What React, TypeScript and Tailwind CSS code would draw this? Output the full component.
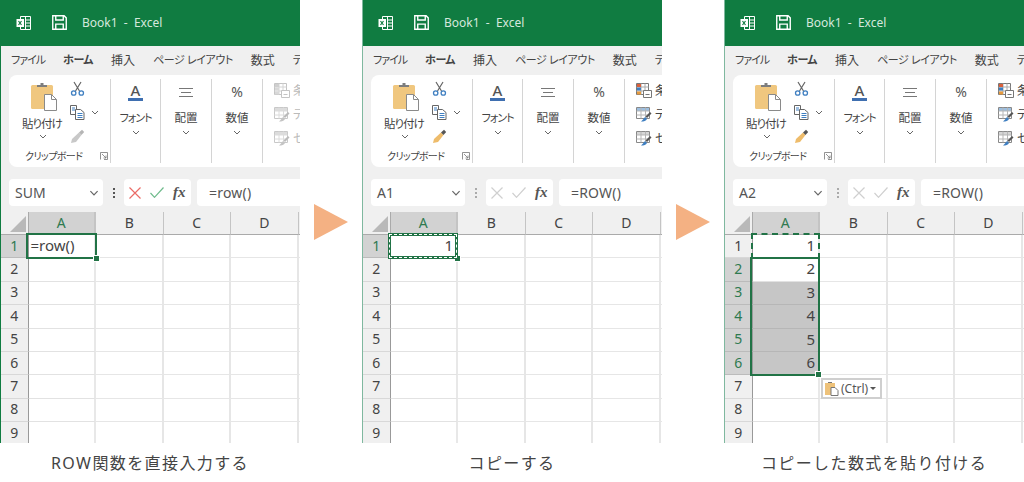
import { Fragment } from 'react';

const ROWS = [1, 2, 3, 4, 5, 6, 7, 8, 9];
const COLS = ['A', 'B', 'C', 'D'];

function Chevron({ className = '', big = false }: { className?: string; big?: boolean }) {
  return (
    <svg className={className} width={big ? 10 : 8} height={big ? 6 : 5} viewBox="0 0 8 5" fill="none" stroke="#666" strokeWidth="1">
      <path d="M1 1l3 3 3-3" />
    </svg>
  );
}

function ExcelLogo() {
  return (
    <svg width="16" height="16" viewBox="0 0 16 16" fill="none" stroke="#fff" strokeWidth="1">
      <path d="M4.500 1.500h10v13h-10z" />
      <path d="M9.500 1.500v13M9.500 5h5M9.500 8h5M9.500 11h5" />
      <rect x="0.500" y="4" width="7.500" height="8" fill="#fff" stroke="none" />
      <path d="M2.500 6l3 4M5.500 6l-3 4" stroke="#107c41" strokeWidth="1.200" />
    </svg>
  );
}

function SaveIcon() {
  return (
    <svg width="15" height="15" viewBox="0 0 14 14" fill="none" stroke="#fff" strokeWidth="1.300">
      <path d="M.7.7h10.600l2 2v10.600H.7z" />
      <path d="M3.500.7v4h7v-4M3.500 13.300V8.500h7v4.800" />
    </svg>
  );
}

function PasteIcon() {
  return (
    <svg width="28" height="29" viewBox="0 0 28 29">
      <rect x="1" y="3" width="22" height="24" rx="1.500" fill="#f0c77f" />
      <path d="M7 5V3h3.500V1h3v2H17v2z" fill="#7d7d7d" />
      <path d="M14.500 12.500h7l5 5v11h-12z" fill="#fff" stroke="#8a8a8a" />
      <path d="M21.500 12.500v5h5" fill="none" stroke="#8a8a8a" />
    </svg>
  );
}

function ScissorsIcon() {
  return (
    <svg width="15" height="15" viewBox="0 0 15 15" fill="none">
      <path d="M4 1l5.500 9M11 1L5.500 10" stroke="#666" strokeWidth="1.200" />
      <circle cx="3.700" cy="12" r="2.200" stroke="#3f7fc1" strokeWidth="1.300" />
      <circle cx="11.300" cy="12" r="2.200" stroke="#3f7fc1" strokeWidth="1.300" />
    </svg>
  );
}

function CopyIcon() {
  return (
    <svg width="15" height="15" viewBox="0 0 15 15" fill="none" stroke="#666">
      <path d="M.5.500h6v9h-6z" fill="#fff" />
      <path d="M5.500 4.500h5l3.500 3v7H5.500z" fill="#fff" />
      <path d="M2 3h3M2 5h3M7.500 8.500h5M7.500 10.500h5M7.500 12.500h5" stroke="#3f7fc1" />
    </svg>
  );
}

function BrushIcon({ on }: { on: boolean }) {
  return (
    <svg width="15" height="15" viewBox="0 0 15 15">
      <path d="M9 3.500l2.500 2.500L6 13 1 14l1-4z" fill={on ? '#eebc6b' : '#c8c8c8'} />
      <path d="M9 3.500L12 .8l2.200 2.200-2.700 3z" fill={on ? '#555' : '#b5b5b5'} />
    </svg>
  );
}

function Launcher() {
  return (
    <svg width="8" height="8" viewBox="0 0 8 8" fill="none" stroke="#777" strokeWidth="0.800">
      <path d="M.5 7.500v-7h7v7H4" />
      <path d="M2 2l4 4M6 3.500V6H3.500" />
    </svg>
  );
}

// conditional format: coloured cells and a small sheet
function CondIcon({ on }: { on: boolean }) {
  const ink = on ? '#777' : '#c4c4c4';
  return (
    <svg width="16" height="15" viewBox="0 0 16 15" fill="none" stroke={ink}>
      <path d="M.5.500h12v11H.5z" />
      <path d="M.5 4h12M.5 8h12M5 .5v11M9 .5v11" stroke={on ? '#aaa' : '#d4d4d4'} />
      <rect x="1" y="1" width="4" height="3" fill={on ? '#d9603b' : '#cfcfcf'} stroke="none" />
      <rect x="1" y="4.500" width="4" height="3" fill={on ? '#3f7fc1' : '#d8d8d8'} stroke="none" />
      <rect x="1" y="8.500" width="4" height="3" fill={on ? '#e79a3d' : '#d8d8d8'} stroke="none" />
      <path d="M7.500 7.500h8v7h-8z" fill="#fff" />
      <path d="M9.500 11.500h4" />
    </svg>
  );
}

// table and cell style: sheet with a blue brush on its corner
function StyleIcon({ on, head }: { on: boolean; head: string }) {
  const ink = on ? '#888' : '#c8c8c8';
  return (
    <svg width="16" height="15" viewBox="0 0 16 15" fill="none" stroke={ink}>
      <path d="M.5.500h13v11H.5z" />
      <rect x="1" y="1" width="12" height="3" fill={on ? head : '#dcdcdc'} stroke="none" />
      <path d="M.5 4h13M.5 8h13M5 .5v11M9.500.5v11" stroke={on ? '#b5b5b5' : '#dcdcdc'} />
      <path d="M14 5l1.500 1.500-4.500 4.500-1.500-1.500z" fill={on ? '#555' : '#bbb'} stroke="none" />
      <path d="M9 10l2 2c-1 2-3 2.500-6 2.500 1.500-1 2.500-3 4-4.500z" fill={on ? '#3f7fc1' : '#c4c4c4'} stroke="none" />
    </svg>
  );
}

function BigGroup({ width, label, labelClass, icon }: { width: string; label: string; labelClass: string; icon: React.ReactNode }) {
  return (
    <div className={`${width} flex flex-col items-center border-r border-[#d4d4d4] h-[84px]`}>
      <div className="h-[24px] mt-[1px] flex items-center justify-center">{icon}</div>
      <span className={`${labelClass} leading-[14px] mt-[7px] text-[#444] whitespace-nowrap`}>{label}</span>
      <Chevron className="mt-[5px]" />
    </div>
  );
}

function Ribbon({ on }: { on: boolean }) {
  const labelClass = on ? 'text-[12px] text-[#444]' : 'text-[12px] text-[#bbb]';
  return (
    <div className="ml-[8px] h-[92px] bg-white rounded-l-lg flex pt-[4px] overflow-hidden">
      {/* clipboard */}
      <div className="w-[102px] h-[84px] shrink-0 border-r border-[#d4d4d4] flex flex-col">
        <div className="flex h-[74px]">
          <div className="w-[56px] pl-[14px] flex flex-col">
            <div className="mt-[3px] ml-[7px]"><PasteIcon /></div>
            <span className="-ml-[1px] mt-[6px] text-[11.5px] tracking-[-1px] leading-[14px] text-[#444] whitespace-nowrap">貼り付け</span>
            <Chevron className="ml-[16px] mt-[3px]" />
          </div>
          <div className="ml-[5px] flex flex-col gap-[9px] pt-[2px]">
            <ScissorsIcon />
            <div className="flex items-center gap-[6px]">
              <CopyIcon />
              <Chevron />
            </div>
            <BrushIcon on={on} />
          </div>
        </div>
        <div className="flex items-center h-[14px] pl-[16px] mt-[1px]">
          <span className="text-[10px] tracking-[-0.6px] leading-[14px] text-[#444] whitespace-nowrap">クリップボード</span>
          <span className="ml-[18px]"><Launcher /></span>
        </div>
      </div>
      <BigGroup
        width="w-[50px] shrink-0"
        label="フォント"
        labelClass="text-[11px] tracking-[-1px]"
        icon={
          <div className="flex flex-col items-center">
            <span className="text-[15px] leading-[14px] text-[#555] font-medium">A</span>
            <span className="w-[15px] h-[3px] bg-[#3f6fb0] mt-[1px]" />
          </div>
        }
      />
      <BigGroup
        width="w-[51px] shrink-0"
        label="配置"
        labelClass="text-[11.5px]"
        icon={
          <svg width="14" height="9" viewBox="0 0 14 9" stroke="#777">
            <path d="M0 .5h14M2 4.500h10M0 8.500h14" />
          </svg>
        }
      />
      <BigGroup
        width="w-[51px] shrink-0"
        label="数値"
        labelClass="text-[11.5px]"
        icon={<span className="text-[14px] leading-none text-[#555]">%</span>}
      />
      <div className="pl-[11px] pt-[4px] flex flex-col gap-[9px] shrink-0">
        <div className="flex items-center gap-[3px] h-[15px]">
          <CondIcon on={on} />
          <span className={labelClass}>条</span>
        </div>
        <div className="flex items-center gap-[3px] h-[15px]">
          <StyleIcon on={on} head="#9dbfe0" />
          <span className={labelClass}>テ</span>
        </div>
        <div className="flex items-center gap-[3px] h-[15px]">
          <StyleIcon on={on} head="#d5d5d5" />
          <span className={labelClass}>セ</span>
        </div>
      </div>
    </div>
  );
}

function FormulaBar({ name, formula, editing }: { name: string; formula: string; editing: boolean }) {
  return (
    <div className="h-[45px] flex items-center pl-[8px] pt-[6px]">
      <div className="w-[94px] h-[27px] shrink-0 bg-white rounded-[4px] flex items-center justify-between pl-[6px] pr-[4px]">
        <span className="text-[14px] text-[#555]">{name}</span>
        <Chevron big />
      </div>
      <div className="w-[21px] shrink-0 flex flex-col items-center gap-[2px]">
        {[0, 1, 2].map((i) => (
          <span key={i} className={editing ? 'w-[2px] h-[2px] bg-[#555]' : 'w-[2px] h-[2px] bg-[#aaa]'} />
        ))}
      </div>
      <div className="w-[67px] h-[27px] shrink-0 bg-white rounded-[4px] flex items-center pl-[5px] gap-[9px]">
        <svg width="12" height="12" viewBox="0 0 12 12" fill="none" stroke={editing ? '#ea6b66' : '#cfcfcf'} strokeWidth="1.200">
          <path d="M.5.500l11 11M11.500.5l-11 11" />
        </svg>
        <svg width="14" height="11" viewBox="0 0 14 11" fill="none" stroke={editing ? '#6fbb8c' : '#cfcfcf'} strokeWidth="1.200">
          <path d="M.5 6l4 4.300L13.500.5" />
        </svg>
        <span className="font-['Liberation_Serif'] italic font-bold text-[15px] leading-none text-[#555]">fx</span>
      </div>
      <div className="ml-[6px] flex-1 h-[27px] bg-white rounded-l-[4px] pl-[12px] flex items-center">
        <span className="text-[14px] text-[#555] tracking-[0.2px]">{formula}</span>
      </div>
    </div>
  );
}

type SheetProps = {
  cells: Record<number, string>;
  left?: boolean;
  active: number[];
  shaded: number[];
  children?: React.ReactNode;
};

function Sheet({ cells, left, active, shaded, children }: SheetProps) {
  return (
    <div className="relative h-[231px] overflow-hidden bg-white grid grid-cols-[27.5px_repeat(4,67.500px)_3px] grid-rows-[23px_repeat(9,23.400px)]">
      <div className="bg-[#f0f0f0] border-r border-b border-[#aaa] flex items-end justify-end p-[2px]">
        <svg width="16" height="16" viewBox="0 0 16 16">
          <path d="M16 0v16H0z" fill="#b9b9b9" />
        </svg>
      </div>
      {COLS.map((c) => (
        <div
          key={c}
          className={
            c === 'A'
              ? 'bg-[#d2d2d2] border-b border-[#aaa] border-r-2 border-r-[#c4c4c4] pb-[2px] text-[14px] text-[#2f7a50] flex items-center justify-center'
              : 'bg-[#f0f0f0] border-b border-[#aaa] border-r border-r-[#c4c4c4] pb-[2px] text-[14px] text-[#444] flex items-center justify-center'
          }
        >
          {c}
        </div>
      ))}
      <div className="bg-[#f0f0f0] border-b border-[#aaa]" />
      {ROWS.map((r) => (
        <Fragment key={r}>
          <div
            className={
              active.includes(r)
                ? 'bg-[#d2d2d2] border-b border-[#bbb] border-r border-r-[#999] pb-[2px] text-[14px] text-[#2f7a50] flex items-center justify-center'
                : 'bg-[#f0f0f0] border-b border-[#d8d8d8] border-r border-r-[#999] pb-[2px] text-[14px] text-[#444] flex items-center justify-center'
            }
          >
            {r}
          </div>
          <div
            className={`${shaded.includes(r) ? 'bg-[#c6c6c6] border-[#b6b6b6]' : 'border-[#e2e2e2]'} border-b border-r-2 border-r-[#e8e8e8] pb-[2px] text-[15px] text-[#444] flex items-center ${left ? 'justify-start pl-[2px]' : 'justify-end pr-[3px]'}`}
          >
            {cells[r]}
          </div>
          {[0, 1, 2].map((c) => (
            <div key={c} className="border-b border-r-2 border-[#e6e6e6]" />
          ))}
          <div className="border-b border-[#e6e6e6]" />
        </Fragment>
      ))}
      {children}
    </div>
  );
}

function Handle({ className }: { className: string }) {
  return <span className={`absolute w-[5px] h-[5px] bg-[#217346] border border-white box-content ${className}`} />;
}

function Pane({
  name,
  formula,
  editing,
  edge,
  caption,
  sheet,
}: {
  name: string;
  formula: string;
  editing: boolean;
  edge: string;
  caption: string;
  sheet: React.ReactNode;
}) {
  return (
    <div className="w-[300px] shrink-0 flex flex-col">
      <div className={`h-[443px] bg-[#f0f0f0] border-l-[1.5px] ${edge} overflow-hidden`}>
        <div className="h-[46px] -ml-[2px] bg-[#107c41] flex items-center pl-[17px] pb-[1px]">
          <ExcelLogo />
          <span className="ml-[20px]"><SaveIcon /></span>
          <span className="ml-[15px] text-[12px] text-[#d5e8dd] whitespace-pre">Book1  -  Excel</span>
        </div>
        <div className="h-[29px] flex items-center pl-[10px] gap-[18px] text-[#444] whitespace-nowrap">
          <span className="text-[11px] tracking-[-1px]">ファイル</span>
          <span className="text-[11px] tracking-[-0.5px] font-bold">ホーム</span>
          <span className="text-[12px]">挿入</span>
          <span className="text-[11px] tracking-[-0.4px]">ページ レイアウト</span>
          <span className="text-[12px]">数式</span>
          <span className="text-[11px] tracking-[-0.5px]">データ</span>
        </div>
        <Ribbon on={!editing} />
        <FormulaBar name={name} formula={formula} editing={editing} />
        {sheet}
      </div>
      <p className="h-[39px] flex items-center justify-center text-[16px] tracking-[1.4px] text-[#444] [font-feature-settings:normal]">{caption}</p>
    </div>
  );
}

function Arrow() {
  return (
    <div className="w-[62px] shrink-0 flex justify-center pt-[204px]">
      <svg width="34" height="36" viewBox="0 0 34 36">
        <path d="M0 0l34 18L0 36z" fill="#f4b183" />
      </svg>
    </div>
  );
}

export default function App() {
  return (
    <div className="w-[1024px] h-[482px] bg-white overflow-hidden flex font-['Noto_Sans','Noto_Sans_CJK_JP',sans-serif] [font-feature-settings:'palt']">
      <Pane
        name="SUM"
        formula="=row()"
        editing
        edge="border-[#107c41]"
        caption="ROW関数を直接入力する"
        sheet={
          <Sheet cells={{ 1: '=row()' }} left active={[1]} shaded={[]}>
            <div className="absolute left-[25px] top-[21px] w-[71px] h-[26px] border-2 border-[#217346]" />
            <Handle className="left-[92px] top-[43px]" />
          </Sheet>
        }
      />
      <Arrow />
      <Pane
        name="A1"
        formula="=ROW()"
        editing={false}
        edge="border-[#7fb89f]"
        caption="コピーする"
        sheet={
          <Sheet cells={{ 1: '1' }} active={[1]} shaded={[]}>
            <Handle className="left-[91px] top-[43px]" />
            <div className="absolute left-[25px] top-[21px] w-[70px] h-[26px] border-[3px] border-[#217346]">
              <div className="-m-[2px] w-[calc(100%+4px)] h-[calc(100%+4px)] border border-dashed border-white" />
            </div>
          </Sheet>
        }
      />
      <Arrow />
      <Pane
        name="A2"
        formula="=ROW()"
        editing={false}
        edge="border-[#7fb89f]"
        caption="コピーした数式を貼り付ける"
        sheet={
          <Sheet cells={{ 1: '1', 2: '2', 3: '3', 4: '4', 5: '5', 6: '6' }} active={[2, 3, 4, 5, 6]} shaded={[3, 4, 5, 6]}>
            <div className="absolute left-[26px] top-[21px] w-[69px] h-[26px] border-2 border-dashed border-[#217346]" />
            <div className="absolute left-[25px] top-[45px] w-[70px] h-[119px] border-2 border-[#217346]" />
            <Handle className="left-[90px] top-[159px]" />
            <div className="absolute left-[96px] top-[166px] w-[61px] h-[21px] bg-white border-2 border-[#cfcfcf] flex items-center pl-[2px]">
              <svg width="14" height="15" viewBox="0 0 14 15">
                <rect x="0" y="2" width="10" height="12" fill="#eec27a" />
                <path d="M3 2V1h4v1z" fill="#777" />
                <path d="M6 6.500h4l3 3v5H6z" fill="#fff" stroke="#777" />
              </svg>
              <span className="ml-[2px] text-[12px] text-[#555]">(Ctrl)</span>
              <span className="ml-[2px] w-0 h-0 border-x-[3px] border-x-transparent border-t-[3px] border-t-[#555]" />
            </div>
          </Sheet>
        }
      />
    </div>
  );
}
